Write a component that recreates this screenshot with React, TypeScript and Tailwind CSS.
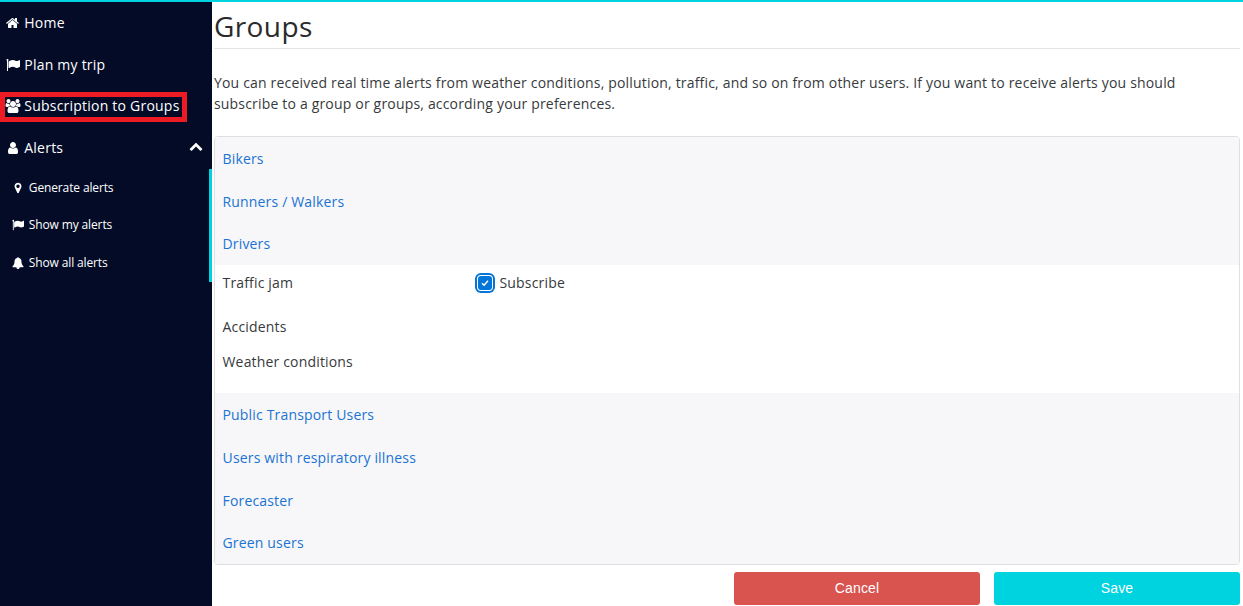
import { ReactNode } from "react";

const paths = {
  home: "M1408 992v480q0 26-19 45t-45 19h-384v-384h-256v384h-384q-26 0-45-19t-19-45v-480q0-1 .5-3t.5-3l575-474 575 474q1 2 1 6zm223-69l-62 74q-8 9-21 11h-3q-13 0-21-7l-692-577-692 577q-12 8-24 7-13-2-21-11l-62-74q-8-10-7-23.5t11-21.5l719-599q32-26 76-26t76 26l244 204v-195q0-14 9-23t23-9h192q14 0 23 9t9 23v408l219 182q10 8 11 21.5t-7 23.5z",
  flag: "M320 256q0 72-64 110v1266q0 13-9.5 22.5t-22.5 9.5h-64q-13 0-22.5-9.5t-9.5-22.5v-1266q-64-38-64-110 0-53 37.5-90.5t90.5-37.5 90.5 37.5 37.5 90.5zm1472 64v763q0 25-12.5 38.5t-39.5 27.5q-215 116-369 116-61 0-123.5-22t-108.5-48-115.5-48-142.5-22q-192 0-464 146-17 9-33 9-26 0-45-19t-19-45v-742q0-32 31-55 21-14 79-43 236-120 421-120 107 0 200 29t219 88q38 19 88 19 54 0 117.5-21t110-47 88-47 54.5-21q26 0 45 19t19 45z",
  users: "M529 896q-162 5-265 128h-134q-82 0-138-40.5t-56-118.5q0-353 124-353 6 0 43.5 21t97.5 42.5 119 21.5q67 0 133-23-5 37-5 66 0 139 81 256zm1071 637q0 120-73 189.5t-194 69.5h-874q-121 0-194-69.5t-73-189.5q0-53 3.5-103.5t14-109 26.5-108.5 43-97.5 62-81 85.5-53.5 111.5-20q10 0 43 21.5t73 48 107 48 135 21.5 135-21.5 107-48 73-48 43-21.5q61 0 111.5 20t85.5 53.5 62 81 43 97.5 26.5 108.5 14 109 3.5 103.5zm-1024-1277q0 106-75 181t-181 75-181-75-75-181 75-181 181-75 181 75 75 181zm704 384q0 159-112.5 271.5t-271.5 112.5-271.5-112.5-112.5-271.5 112.5-271.5 271.5-112.5 271.5 112.5 112.5 271.5zm576 225q0 78-56 118.5t-138 40.5h-134q-103-123-265-128 81-117 81-256 0-29-5-66 66 23 133 23 59 0 119-21.5t97.5-42.5 43.5-21q124 0 124 353zm-128-609q0 106-75 181t-181 75-181-75-75-181 75-181 181-75 181 75 75 181z",
  user: "M1536 1399q0 109-62.5 187t-150.5 78h-854q-88 0-150.5-78t-62.5-187q0-85 8.5-160.5t31.5-152 58.5-131 94-89 134.5-34.5q131 128 313 128t313-128q76 0 134.5 34.5t94 89 58.5 131 31.5 152 8.5 160.5zm-256-887q0 159-112.5 271.5t-271.5 112.5-271.5-112.5-112.5-271.5 112.5-271.5 271.5-112.5 271.5 112.5 112.5 271.5z",
  marker: "M1152 640q0-106-75-181t-181-75-181 75-75 181 75 181 181 75 181-75 75-181zm256 0q0 109-33 179l-364 774q-16 33-47.5 52t-67.5 19-67.5-19-46.5-52l-365-774q-33-70-33-179 0-212 150-362t362-150 362 150 150 362z",
  bell: "M912 1696q0-16-16-16-59 0-101.5-42.5t-42.5-101.5q0-16-16-16t-16 16q0 73 51.5 124.5t124.5 51.5q16 0 16-16zm816-288q0 52-38 90t-90 38h-448q0 106-75 181t-181 75-181-75-75-181h-448q-52 0-90-38t-38-90q50-42 91-88t85-119.5 74.5-158.5 50-206 19.5-260q0-152 117-282.5t307-158.5q-8-19-8-39 0-40 28-68t68-28 68 28 28 68q0 20-8 39 190 28 307 158.5t117 282.5q0 139 19.5 260t50 206 74.5 158.5 85 119.5 91 88z",
  chevronUp: "M1683 1331l-166 165q-19 19-45 19t-45-19l-531-531-531 531q-19 19-45 19t-45-19l-166-165q-19-19-19-45.5t19-45.5l742-741q19-19 45-19t45 19l742 741q19 19 19 45.5t-19 45.5z",
};

function Icon({ name, className }: { name: keyof typeof paths; className: string }) {
  return (
    <svg viewBox="0 0 1792 1792" className={`shrink-0 overflow-visible fill-current ${className}`}>
      <path d={paths[name]} />
    </svg>
  );
}

function NavItem({ icon, children }: { icon: keyof typeof paths; children: ReactNode }) {
  return (
    <a className="flex h-[42px] items-center pl-1.5">
      <Icon name={icon} className="mr-[4.3px] size-3.5" />
      {children}
    </a>
  );
}

function SubItem({ icon, children }: { icon: keyof typeof paths; children: ReactNode }) {
  return (
    <a className="flex h-[37.5px] items-center pl-3 text-xs tracking-[-0.13px]">
      <Icon name={icon} className="mr-[4.8px] size-3" />
      {children}
    </a>
  );
}

function GroupLink({ children }: { children: ReactNode }) {
  return <a className="flex h-[42.6px] items-center pl-[7.5px] text-[#1b73d3]">{children}</a>;
}

export default function App() {
  return (
    <div className="flex h-[606px] w-[1243px] flex-col overflow-hidden border-t-2 border-[#00d3e0] bg-white font-['Open_Sans',sans-serif] text-sm text-[#373a3c]">
      <div className="flex min-h-0 flex-1">
        <nav className="flex w-[212px] shrink-0 flex-col bg-[#030b27] tracking-[0.22px] text-white">
          <NavItem icon="home">Home</NavItem>
          <NavItem icon="flag">Plan my trip</NavItem>
          <div className="flex h-[41px] items-center">
            <a className="mt-px flex h-[30px] w-[187px] items-center border-[5px] border-[#ed1c24] pb-0.5 pl-px">
              <Icon name="users" className="mr-[4.3px] size-3.5" />
              <span className="whitespace-nowrap">Subscription to Groups</span>
            </a>
          </div>
          <div className="flex h-[42px] items-center justify-between pr-[9.5px]">
            <NavItem icon="user">Alerts</NavItem>
            <Icon name="chevronUp" className="mb-1 size-3.5" />
          </div>
          <div className="flex h-[113px] flex-col border-r-[3px] border-[#00d3e0]">
            <SubItem icon="marker">Generate alerts</SubItem>
            <SubItem icon="flag">Show my alerts</SubItem>
            <SubItem icon="bell">Show all alerts</SubItem>
          </div>
        </nav>
        <main className="flex w-[1028px] flex-col pl-0.5">
          <h1 className="flex h-[47px] items-center border-b border-[#e3e4e5] pt-px text-[28px] tracking-[0.4px] text-[#292b2c]">Groups</h1>
          <p className="mt-[23px] leading-[21px] tracking-[0.18px]">
            You can received real time alerts from weather conditions, pollution, traffic, and so on from other users. If you want to receive alerts you should
            <br />
            subscribe to a group or groups, according your preferences.
          </p>
          <section className="mt-[22px] h-[429px] shrink-0 overflow-hidden rounded-[4px] border border-[#dedfe1] tracking-[0.17px]">
            <div className="h-32 bg-[#f7f7f9] pt-[0.9px]">
              <GroupLink>Bikers</GroupLink>
              <GroupLink>Runners / Walkers</GroupLink>
              <GroupLink>Drivers</GroupLink>
            </div>
            <div className="h-32 pl-[7.5px]">
              <div className="flex h-[35px] items-center">
                <span className="w-[255.5px]">Traffic jam</span>
                <span className="mr-[7.5px] flex size-3.5 items-center justify-center rounded-[3px] bg-[#0275d8] shadow-[0_0_0_1px_#fff,0_0_0_3px_#0275d8]">
                  <svg viewBox="0 0 8 8" className="size-2 fill-none stroke-white stroke-[1.5]">
                    <path d="M1 4.2L3.1 6.2L7 1.8" />
                  </svg>
                </span>
                <span>Subscribe</span>
              </div>
              <div className="mt-[9px] flex h-[35px] items-center">Accidents</div>
              <div className="flex h-[35px] items-center">Weather conditions</div>
            </div>
            <div className="h-[171px] bg-[#f7f7f9] pt-[1.1px]">
              <GroupLink>Public Transport Users</GroupLink>
              <GroupLink>Users with respiratory illness</GroupLink>
              <GroupLink>Forecaster</GroupLink>
              <GroupLink>Green users</GroupLink>
            </div>
          </section>
          <div className="mt-[7px] flex justify-end gap-3.5 font-['Liberation_Sans',sans-serif] text-white">
            <button className="h-[33px] w-[246px] rounded-[3px] bg-[#d9534f] pb-0.5 tracking-[0.15px]">Cancel</button>
            <button className="h-[33px] w-[246px] rounded-[3px] bg-[#00d3e0] pb-0.5 tracking-[0.15px]">Save</button>
          </div>
        </main>
      </div>
    </div>
  );
}
